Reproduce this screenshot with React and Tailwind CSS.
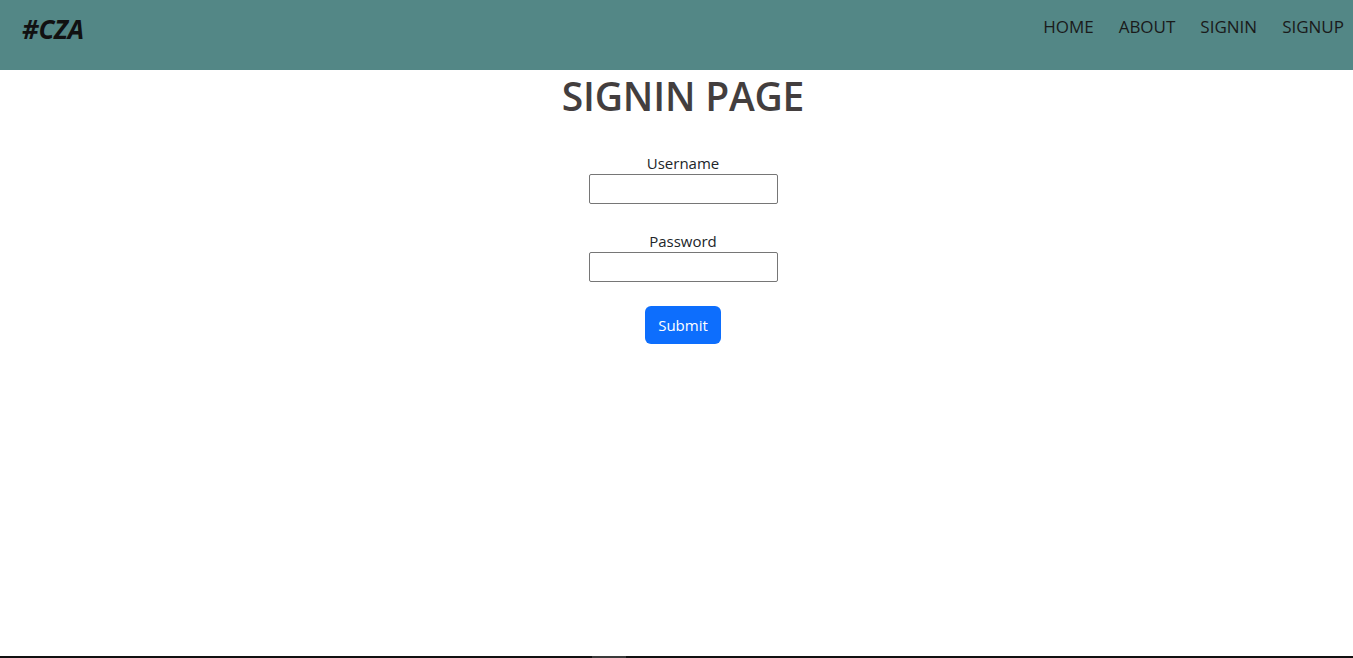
export default function App() {
  return (
    <div
      className="h-[658px] flex flex-col bg-white"
      style={{ fontFamily: '"Open Sans", "Noto Sans", Arial, sans-serif' }}
    >
      {/* Navbar */}
      <nav className="h-[70px] bg-[#538786] flex items-start justify-between pl-[22px] pr-[9px] pt-[10px]">
        <span className="text-[26px] font-bold italic text-[#111] tracking-[-0.3px]">#CZA</span>
        <ul className="flex items-center gap-[25px] pt-[4px] text-[17px] text-[#1a1a1a]">
          <li>HOME</li>
          <li>ABOUT</li>
          <li>SIGNIN</li>
          <li>SIGNUP</li>
        </ul>
      </nav>

      {/* Main */}
      <main className="flex-1 flex flex-col items-center pl-[13px]">
        <h1 className="mt-[2px] text-[39px] font-semibold text-[#433e3e] leading-[48px] tracking-[-0.2px]">
          SIGNIN PAGE
        </h1>

        <form className="mt-[32px] flex flex-col items-center text-[#212529]">
          <label className="text-[15px] leading-[22px]">Username</label>
          <input
            type="text"
            className="w-[189px] h-[30px] border border-[#767676] rounded-[2px] bg-white"
          />
          <label className="mt-[26px] text-[15px] leading-[22px]">Password</label>
          <input
            type="password"
            className="w-[189px] h-[30px] border border-[#767676] rounded-[2px] bg-white"
          />
          <button
            type="button"
            className="mt-[24px] w-[76px] h-[38px] rounded-[6px] bg-[#0d6efd] text-white text-[15px]"
          >
            Submit
          </button>
        </form>
      </main>

      {/* Bottom bar */}
      <div className="h-[2px] flex">
        <div className="w-[592px] bg-[#111]" />
        <div className="w-[34px] bg-[#3a3a3a]" />
        <div className="flex-1 bg-[#111]" />
      </div>
    </div>
  );
}
